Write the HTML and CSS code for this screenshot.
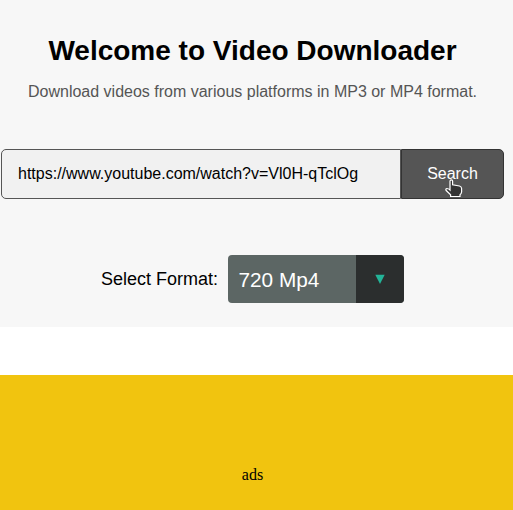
FILE: index.html
```html
<!DOCTYPE html>
<html lang="en">
<head>
<meta charset="utf-8">
<title>Video Downloader</title>
<link rel="stylesheet" href="styles.css">
</head>
<body>
<main class="hero">
  <h1 class="title">Welcome to Video Downloader</h1>
  <p class="subtitle">Download videos from various platforms in MP3 or MP4 format.</p>
  <form class="search">
    <div class="search-input">https://www.youtube.com/watch?v=Vl0H-qTclOg</div>
    <button class="search-button" type="button">Search
      <svg class="pointer" width="19" height="19" viewBox="0 0 19 19"><path d="M5 11V2.2Q5 .8 6.3 .8T7.6 2.2V5.8L14.5 7Q16.6 7.6 16.6 9.6V13Q16.4 14.8 15 15.8V17.5H5.6V15.8L1 11.3Q.4 9.8 2 9.5Q3.4 9.5 5 11Z"/></svg>
    </button>
  </form>
  <div class="format">
    <span class="format-label">Select Format:</span>
    <div class="select"><span class="select-value">720 Mp4</span><span class="select-arrow"><svg width="10" height="10" viewBox="0 0 10 10"><path d="M.3 .8H9.7L5 10Z"/></svg></span></div>
  </div>
</main>
<section class="ads">ads</section>
</body>
</html>
```
FILE: styles.css
```css
* { box-sizing: border-box; }
html, body { height: 100%; }
body {
  margin: 0;
  display: flex;
  flex-direction: column;
  overflow: hidden;
  background: #fff;
  font-family: "Liberation Sans", Arial, sans-serif;
}
.hero {
  flex: none;
  height: 327px;
  padding: 35px 8px 0 0;
  background: #f7f7f7;
  display: flex;
  flex-direction: column;
  align-items: center;
}
.title {
  margin: 0;
  font-size: 28px;
  line-height: 32px;
  white-space: nowrap;
}
.subtitle {
  margin: 16px 0 0;
  color: #555;
  font-size: 16px;
  line-height: 18px;
  white-space: nowrap;
}
.search {
  display: flex;
  width: 503px;
  height: 50px;
  margin: 48px 0 0;
}
.search-input {
  width: 400px;
  padding-left: 16px;
  border: 1px solid #555;
  border-radius: 5px 0 0 5px;
  background: #f1f1f1;
  font-size: 16px;
  line-height: 47px;
}
.search-button {
  position: relative;
  width: 103px;
  padding: 0;
  border: 1px solid #333;
  border-radius: 0 5px 5px 0;
  background: #555;
  color: #fff;
  font: 16px/46px "Liberation Sans", Arial, sans-serif;
}
.pointer {
  position: absolute;
  left: 43px;
  top: 29px;
  fill: #333;
  stroke: #fff;
  stroke-width: 1.2;
}
.format {
  display: flex;
  align-items: center;
  gap: 10px;
  margin-top: 56px;
}
.format-label { font-size: 18px; }
.select {
  display: flex;
  width: 176px;
  height: 48px;
  border-radius: 4px;
  overflow: hidden;
  background: #5c6664;
  color: #fff;
  font-size: 20.8px;
  line-height: 50px;
}
.select-value { flex: 1; padding-left: 10.4px; }
.select-arrow {
  width: 48px;
  display: flex;
  align-items: center;
  justify-content: center;
  background: #2b2e2e;
}
.select-arrow svg { fill: #23b498; }
.ads {
  flex: 1;
  margin-top: 48px;
  padding: 90px 8px 0 0;
  background: #f1c40f;
  font: 16px/20px "Liberation Serif", serif;
  text-align: center;
}
```
